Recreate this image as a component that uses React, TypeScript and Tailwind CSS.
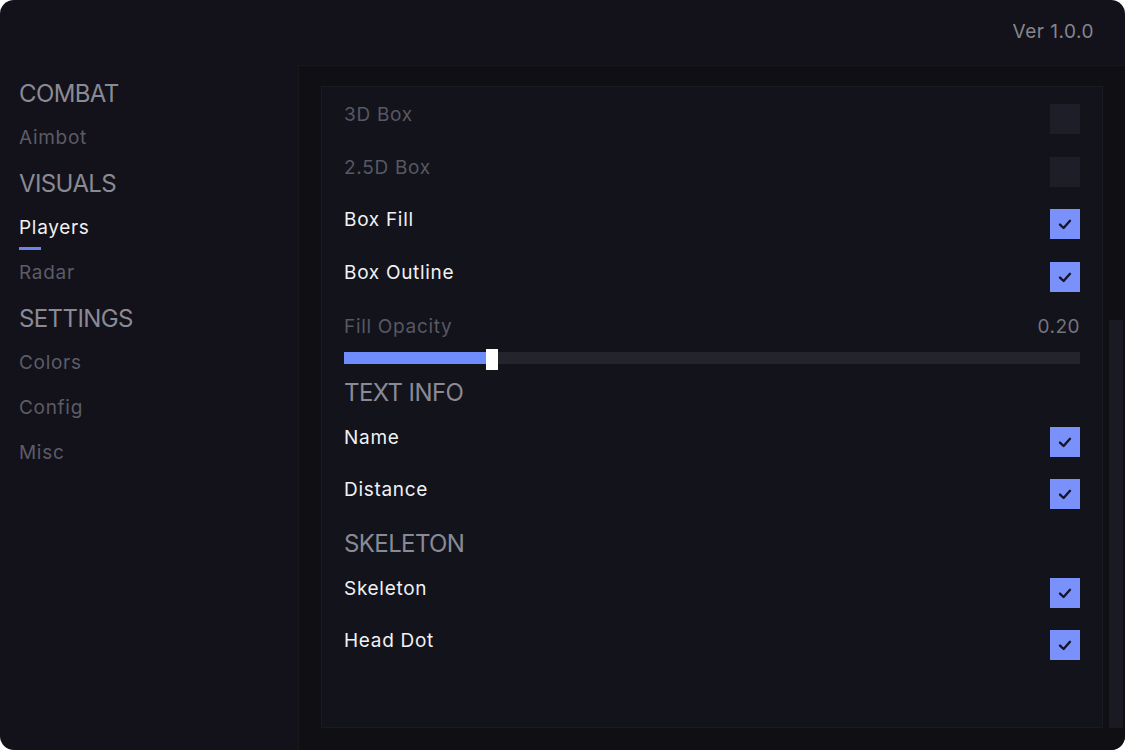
import React from 'react'

type Row =
    | { kind: 'check'; label: string; checked: boolean; disabled?: boolean }
    | { kind: 'header'; label: string }

const nav = [
    { label: 'COMBAT', header: true },
    { label: 'Aimbot' },
    { label: 'VISUALS', header: true },
    { label: 'Players', active: true },
    { label: 'Radar' },
    { label: 'SETTINGS', header: true },
    { label: 'Colors' },
    { label: 'Config' },
    { label: 'Misc' },
]

const top: Row[] = [
    { kind: 'check', label: '3D Box', checked: false, disabled: true },
    { kind: 'check', label: '2.5D Box', checked: false, disabled: true },
    { kind: 'check', label: 'Box Fill', checked: true },
    { kind: 'check', label: 'Box Outline', checked: true },
]

const bottom: Row[] = [
    { kind: 'header', label: 'TEXT INFO' },
    { kind: 'check', label: 'Name', checked: true },
    { kind: 'check', label: 'Distance', checked: true },
    { kind: 'header', label: 'SKELETON' },
    { kind: 'check', label: 'Skeleton', checked: true },
    { kind: 'check', label: 'Head Dot', checked: true },
]

function Checkbox({ checked }: { checked: boolean }) {
    if (!checked) return <div className="w-[30px] h-[30px] bg-[#1d1e28]" />
    return (
        <div className="w-[30px] h-[30px] bg-[#7a91fc] flex items-center justify-center">
            <svg width="20" height="20" viewBox="0 0 20 20" fill="none">
                <path d="M5 10.6 L8.6 14 L15 6.8" stroke="#15162a" strokeWidth="2.4" strokeLinecap="round" strokeLinejoin="round" />
            </svg>
        </div>
    )
}

function RowItem({ row, first }: { row: Row; first: boolean }) {
    if (row.kind === 'header') {
        return (
            <div className={`h-[38px] mb-[4px] flex items-center text-[24px] tracking-tight text-[#8a8a95] ${first ? 'mt-[10px]' : 'mt-[4px]'}`}>
                {row.label}
            </div>
        )
    }
    return (
        <div className="h-[52.5px] flex items-center justify-between">
            <span className={`pb-[8px] text-[19px] tracking-[0.7px] ${row.disabled ? 'text-[#575864]' : 'text-[#f1f1f3]'}`}>{row.label}</span>
            <Checkbox checked={row.checked} />
        </div>
    )
}

export default function App() {
    const value = 0.2
    return (
        <div className="w-[1125px] h-[750px] bg-white" style={{ fontFamily: 'Inter, "Liberation Sans", sans-serif' }}>
            <div className="w-full h-full rounded-[14px] overflow-hidden bg-[#13121a] flex flex-col">
                {/* Header */}
                <div className="h-[65px] flex items-center justify-end pr-[31px] text-[19px] text-[#85858f] tracking-[0.5px]">
                    Ver 1.0.0
                </div>

                <div className="flex flex-1 min-h-0">
                    {/* Sidebar */}
                    <div className="w-[298px] pt-[6px] pl-[19px] flex flex-col">
                        {nav.map((n) => (
                            <div key={n.label} className="relative h-[45px] flex items-center">
                                <span
                                    className={
                                        n.header
                                            ? 'text-[24px] tracking-tight text-[#8a8a95]'
                                            : n.active
                                              ? 'text-[19px] tracking-[0.7px] text-[#f1f1f3]'
                                              : 'text-[19px] tracking-[0.7px] text-[#5c5c67]'
                                    }
                                >
                                    {n.label}
                                </span>
                                {n.active && <div className="absolute left-0 top-[41px] w-[22px] h-[3px] bg-[#6d84ee]" />}
                            </div>
                        ))}
                    </div>

                    {/* Main panel */}
                    <div className="flex-1 bg-[#0f0f14] border-t border-l border-[#17171e] pl-[22px] pt-[20px] pb-[22px] pr-[2px] flex gap-[6px]">
                        <div className="flex-1 bg-[#13131b] border border-[#1a1a23] px-[22px] pt-[6px] flex flex-col">
                            {top.map((r, i) => (
                                <RowItem key={r.label} row={r} first={i === 0} />
                            ))}

                            <div className="h-[48.5px] flex items-center justify-between">
                                <span className="text-[19px] tracking-[0.7px] text-[#575864]">Fill Opacity</span>
                                <span className="text-[19px] tracking-[0.5px] text-[#74747e]">{value.toFixed(2)}</span>
                            </div>
                            <div className="relative h-[12px] bg-[#24242c]">
                                <div className="h-full bg-[#6f8cfc]" style={{ width: `${value * 100}%` }} />
                                <div className="absolute top-[-3px] h-[21px] w-[12px] bg-white" style={{ left: `calc(${value * 100}% - 5px)` }} />
                            </div>

                            {bottom.map((r, i) => (
                                <RowItem key={r.label} row={r} first={i === 0} />
                            ))}
                        </div>

                        {/* Scrollbar */}
                        <div className="w-[14px] flex flex-col">
                            <div className="h-[234px]" />
                            <div className="flex-1 bg-[#1a1a22]" />
                        </div>
                    </div>
                </div>
            </div>
        </div>
    )
}
